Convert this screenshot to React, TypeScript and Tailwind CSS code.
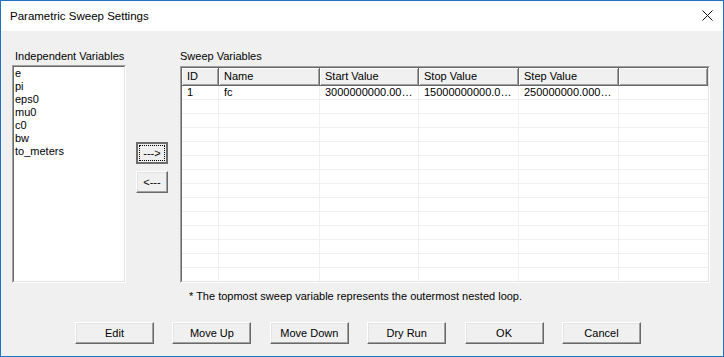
const font = { fontFamily: '"Liberation Sans", Arial, sans-serif' };

const colWidths = [37, 101, 99, 100, 100];
const headers = ["ID", "Name", "Start Value", "Stop Value", "Step Value", ""];
const firstRow = ["1", "fc", "3000000000.00…", "15000000000.0…", "250000000.000…", ""];
const variables = ["e", "pi", "eps0", "mu0", "c0", "bw", "to_meters"];
const actions = ["Edit", "Move Up", "Move Down", "Dry Run", "OK", "Cancel"];

function RaisedButton({ label, w }: { label: string; w: string }) {
  return (
    <button
      className={`${w} h-[22px] bg-[#f0f0f0] border border-t-white border-l-white border-r-[#696969] border-b-[#696969] shadow-[inset_-1px_-1px_0_#a0a0a0,inset_1px_1px_0_#e3e3e3] text-[11px] leading-[13px] text-black flex items-center justify-center`}
    >
      {label}
    </button>
  );
}

function Sunken({ className, children }: { className: string; children?: React.ReactNode }) {
  return (
    <div className={`${className} border border-t-[#a0a0a0] border-l-[#a0a0a0] border-r-white border-b-white`}>
      <div className="w-full h-full border border-t-[#696969] border-l-[#696969] border-r-[#e3e3e3] border-b-[#e3e3e3] bg-white overflow-hidden">
        {children}
      </div>
    </div>
  );
}

function SweepTable() {
  const rows = Array.from({ length: 14 }, (_, i) => (i === 0 ? firstRow : headers.map(() => "")));
  return (
    <Sunken className="mt-[3px] h-[217px] w-[530px]">
      <div className="flex h-[18px]">
        {headers.map((h, i) => (
          <div
            key={i}
            className={`${i < 5 ? "" : "flex-1"} h-full bg-[#f0f0f0] border-r border-b border-r-[#696969] border-b-[#696969] shadow-[inset_1px_1px_0_#fff,inset_-1px_-1px_0_#a0a0a0] pl-[5px] flex items-center leading-[13px] whitespace-nowrap`}
            style={i < 5 ? { width: colWidths[i] } : undefined}
          >
            {h}
          </div>
        ))}
      </div>
      {rows.map((r, ri) => (
        <div key={ri} className="flex h-[14px] border-b border-[#f0f0f0]">
          {r.map((c, ci) => (
            <div
              key={ci}
              className={`${ci < 5 ? "border-r border-[#f0f0f0]" : "flex-1"} h-full pl-[5px] leading-[13px] whitespace-nowrap overflow-hidden`}
              style={ci < 5 ? { width: colWidths[ci] } : undefined}
            >
              {c}
            </div>
          ))}
        </div>
      ))}
    </Sunken>
  );
}

export default function App() {
  return (
    <div className="w-[724px] h-[357px] border border-[#1e72c3] flex flex-col text-black" style={font}>
      <div className="h-[30px] bg-white flex justify-between pl-[9px] pr-[10px]">
        <span className="text-[11.5px] leading-[30px]">Parametric Sweep Settings</span>
        <svg className="mt-[9px]" width="11" height="11" viewBox="0 0 11 11">
          <path d="M0.5 0.5 L10.5 10.5 M10.5 0.5 L0.5 10.5" stroke="#111" strokeWidth="1" fill="none" />
        </svg>
      </div>

      <div className="flex-1 bg-[#f0f0f0] pt-[19px] text-[11px]">
        <div className="flex pl-[11px]">
          <div className="w-[114px]">
            <div className="h-[13px] leading-[13px] pl-[3px]">Independent Variables</div>
            <Sunken className="mt-[2px] h-[218px] w-[114px]">
              <div className="pl-[1px]">
                {variables.map((v) => (
                  <div key={v} className="leading-[13px] h-[13px]">
                    {v}
                  </div>
                ))}
              </div>
            </Sunken>
          </div>

          <div className="ml-[10px] w-[32px] pt-[92px] flex flex-col gap-[7px]">
            <button className="w-[32px] h-[22px] bg-[#f0f0f0] border-2 border-[#6d6d6d] p-[1px] flex">
              <span className="flex-1 border border-dotted border-black flex items-center justify-center leading-[13px]">
                ---&gt;
              </span>
            </button>
            <RaisedButton label="<---" w="w-[32px]" />
          </div>

          <div className="ml-[12px] w-[530px]">
            <div className="h-[13px] leading-[13px]">Sweep Variables</div>
            <SweepTable />
          </div>
        </div>

        <div className="mt-[7px] pl-[188px] h-[13px] leading-[13px]">
          * The topmost sweep variable represents the outermost nested loop.
        </div>

        <div className="mt-[19px] pl-[74px] flex gap-[18.4px]">
          {actions.map((a) => (
            <RaisedButton key={a} label={a} w="w-[79px]" />
          ))}
        </div>
      </div>
    </div>
  );
}
